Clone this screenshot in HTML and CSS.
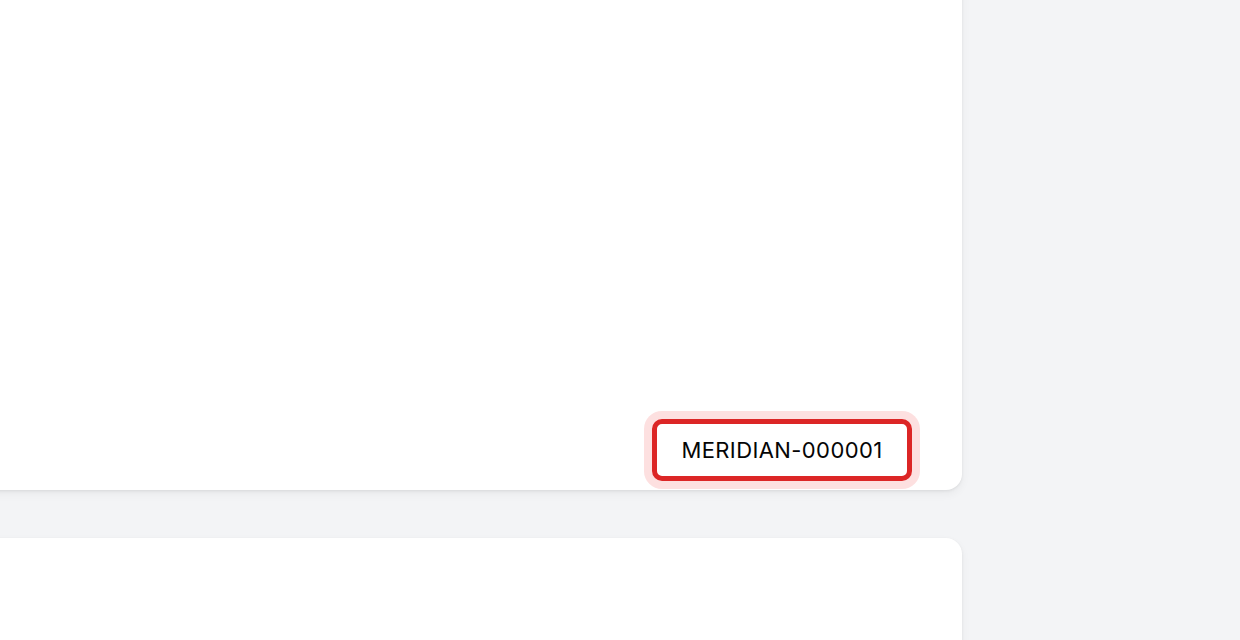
FILE: index.html
```html
<!DOCTYPE html>
<html>
<head>
<meta charset="utf-8">
<link rel="stylesheet" href="styles.css">
</head>
<body>
<main class="column">
  <section class="card card-top">
    <div class="field-row">
      <input class="code-input" type="text" value="MERIDIAN-000001">
    </div>
  </section>
  <section class="card card-next"></section>
</main>
</body>
</html>
```
FILE: styles.css
```css
html, body {
  margin: 0;
  padding: 0;
  height: 100%;
}
body {
  background: #f3f4f6;
  overflow: hidden;
  font-family: Inter, "Noto Sans", "Liberation Sans", sans-serif;
}
.column {
  width: 1002px;
  margin-left: -40px;
  margin-top: -200px;
  display: flex;
  flex-direction: column;
  gap: 48px;
}
.card {
  background: #ffffff;
  border-radius: 16px;
  box-shadow: 0 1px 3px rgba(0, 0, 0, 0.07), 0 4px 10px rgba(0, 0, 0, 0.05);
}
.card-top {
  height: 690px;
  display: flex;
  flex-direction: column;
  justify-content: flex-end;
  align-items: flex-end;
  padding: 0 50px 9px 0;
  box-sizing: border-box;
}
.card-next {
  height: 160px;
}
.field-row {
  display: flex;
}
.code-input {
  width: 260px;
  height: 62px;
  box-sizing: border-box;
  border: 5px solid #dc2626;
  border-radius: 10px;
  box-shadow: 0 0 0 8px #fde0e0;
  outline: none;
  background: #fff;
  font-family: Inter, "Noto Sans", "Liberation Sans", sans-serif;
  font-size: 22px;
  color: #050505;
  text-align: center;
  padding: 0 8px;
  letter-spacing: 0.4px;
}
```
